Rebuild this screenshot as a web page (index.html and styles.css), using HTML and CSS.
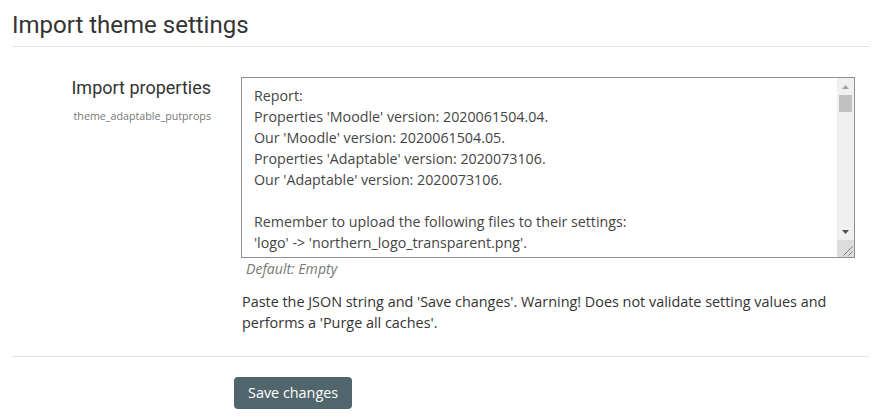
FILE: index.html
```html
<!DOCTYPE html>
<html lang="en">
<head>
<meta charset="utf-8">
<title>Import theme settings</title>
<link rel="stylesheet" href="styles.css">
</head>
<body>
<div class="page">
  <h2 class="title">Import theme settings</h2>
  <div class="setting">
    <div class="label-col">
      <label class="label" for="putprops">Import properties</label>
      <span class="name">theme_adaptable_putprops</span>
    </div>
    <div class="field-col">
      <div class="field-wrap">
        <textarea id="putprops" class="field" spellcheck="false">Report:
Properties 'Moodle' version: 2020061504.04.
Our 'Moodle' version: 2020061504.05.
Properties 'Adaptable' version: 2020073106.
Our 'Adaptable' version: 2020073106.

Remember to upload the following files to their settings:
'logo' -> 'northern_logo_transparent.png'.
'favicon' -> 'favicon.ico'.
'frontpagerendererdefaultimage' -> 'default_image.jpg'.
'homebk' -> 'homepage_background.jpg'.
'loginbgimage' -> 'login_background.jpg'.
'p1' -> 'slide_one.jpg'.
'p2' -> 'slide_two.jpg'.
'p3' -> 'slide_three.jpg'.

Properties:
{"moodle_version":"2020061504.04","moodle_release":"3.9.4+ (Build: 20210128)","adaptable_version":"2020073106","adaptable_release":"3.9.0.6","adaptable_buttoncolor":"#51666C","adaptable_fontname":"Open Sans","adaptable_fonttitlename":"Roboto"}</textarea>
        <div class="scrollbar" aria-hidden="true">
          <div class="sb-btn">
            <svg width="7" height="4" viewBox="0 0 7 4"><path d="M0 4 L3.5 0 L7 4 Z" fill="#a3a3a3"/></svg>
          </div>
          <div class="sb-track"><div class="sb-thumb"></div></div>
          <div class="sb-btn">
            <svg width="7" height="4" viewBox="0 0 7 4"><path d="M0 0 L7 0 L3.5 4 Z" fill="#505050"/></svg>
          </div>
          <div class="sb-corner">
            <svg width="17" height="17" viewBox="0 0 17 17"><path d="M15.5 6.5 L6.5 15.5 M15.5 11.5 L11.5 15.5" stroke="#7a7a7a" stroke-width="1" fill="none"/></svg>
          </div>
        </div>
      </div>
      <div class="default">Default: Empty</div>
      <p class="desc">Paste the JSON string and 'Save changes'. Warning! Does not validate setting values and performs a 'Purge all caches'.</p>
    </div>
  </div>
  <hr class="rule">
  <div class="buttons">
    <button type="button" class="btn">Save changes</button>
  </div>
</div>
</body>
</html>
```

FILE: styles.css
```css
html, body {
  margin: 0;
  padding: 0;
  background: #ffffff;
}

body {
  font-family: "Open Sans", "Liberation Sans", sans-serif;
  font-size: 14px;
  line-height: 21px;
  color: #333333;
}

.page {
  padding: 0 22px 0 12px;
}

.title {
  margin: 11px 0 0 0;
  padding: 0 0 6px 0;
  font-family: Roboto, "Liberation Sans", sans-serif;
  font-weight: 400;
  font-size: 24px;
  line-height: 29px;
  color: #333333;
  border-bottom: 1px solid #e3e3e3;
}

.setting {
  display: grid;
  grid-template-columns: 199px 615px;
  column-gap: 30px;
  margin-top: 30px;
}

.label-col {
  display: flex;
  flex-direction: column;
  align-items: flex-end;
  text-align: right;
}

.label {
  font-family: Roboto, "Liberation Sans", sans-serif;
  font-size: 18px;
  line-height: 21px;
  color: #333333;
}

.name {
  margin-top: 10px;
  font-size: 10.7px;
  line-height: 16px;
  color: #777777;
}

.field-col {
  display: flex;
  flex-direction: column;
}

.field-wrap {
  position: relative;
  width: 614px;
  height: 181px;
}

.field {
  display: block;
  box-sizing: border-box;
  width: 614px;
  height: 181px;
  margin: 0;
  padding: 7px 30px 6px 12px;
  border: 1px solid #8f8f8f;
  border-radius: 0;
  font-family: "Open Sans", "Liberation Sans", sans-serif;
  font-size: 14.25px;
  line-height: 21px;
  color: #454545;
  background: #ffffff;
  overflow: hidden;
  resize: none;
  outline: none;
}

.scrollbar {
  position: absolute;
  top: 1px;
  right: 1px;
  bottom: 1px;
  width: 17px;
  display: flex;
  flex-direction: column;
  background: #f0f0f0;
}

.sb-btn {
  height: 17px;
  flex: 0 0 17px;
  display: flex;
  align-items: center;
  justify-content: center;
}

.sb-btn svg {
  display: block;
}

.sb-track {
  flex: 1;
  padding: 0 2px;
}

.sb-thumb {
  height: 17px;
  background: #c1c1c1;
}

.sb-corner {
  flex: 0 0 17px;
  height: 17px;
  background: #dcdcdc;
}

.sb-corner svg {
  display: block;
}

.default {
  padding-left: 5px;
  margin-top: 1px;
  font-style: italic;
  font-size: 14.1px;
  line-height: 20px;
  color: #777777;
}

.desc {
  margin: 12px 0 0 1px;
  width: 610px;
  font-size: 14.4px;
  line-height: 21px;
}

.rule {
  margin: 23px 0 0 0;
  border: 0;
  border-top: 1px solid #e3e3e3;
  height: 0;
}

.buttons {
  padding: 20px 0 12px 222px;
}

.btn {
  font-family: "Open Sans", "Liberation Sans", sans-serif;
  font-size: 14.4px;
  line-height: 21px;
  color: #ffffff;
  background: #51666c;
  border: 0;
  border-radius: 4px;
  padding: 5px 14px 6px 14px;
  cursor: pointer;
}
```
